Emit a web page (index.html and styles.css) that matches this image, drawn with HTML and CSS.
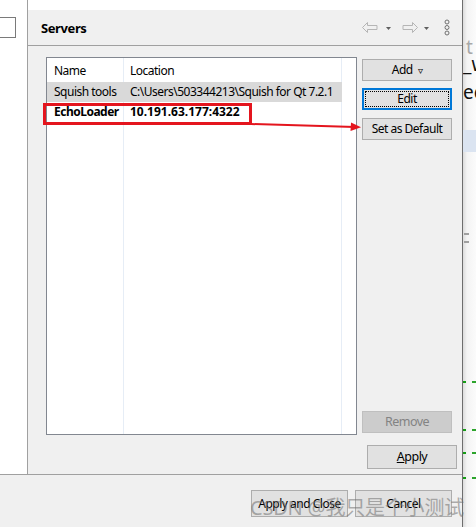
FILE: index.html
```html
<!DOCTYPE html>
<html>
<head>
<meta charset="utf-8">
<link rel="stylesheet" href="styles.css">
</head>
<body>
<div class="screen">
  <div class="window">
    <div class="top">
      <div class="left"><div class="input"></div></div>
      <div class="pref">
        <div class="pref-head">
          <div class="title">Servers</div>
          <div class="tools">
            <svg class="arrow" width="16" height="11" viewBox="0 0 16 11"><path d="M0.5 5.5 L5.5 0.5 L5.5 3.5 L15 3.5 L15 7.5 L5.5 7.5 L5.5 10.5 Z" fill="none" stroke="#b5b5b5" stroke-width="1"/></svg>
            <svg class="drop" width="5" height="3" viewBox="0 0 5 3"><path d="M0 0 H5 L2.5 3 Z" fill="#5f5f5f"/></svg>
            <svg class="arrow fwd" width="16" height="11" viewBox="0 0 16 11"><path d="M15.5 5.5 L10.5 0.5 L10.5 3.5 L1 3.5 L1 7.5 L10.5 7.5 L10.5 10.5 Z" fill="none" stroke="#b5b5b5" stroke-width="1"/></svg>
            <svg class="drop" width="5" height="3" viewBox="0 0 5 3"><path d="M0 0 H5 L2.5 3 Z" fill="#5f5f5f"/></svg>
            <svg class="more" width="6" height="17" viewBox="0 0 6 17"><circle cx="3" cy="3" r="2" fill="none" stroke="#707070"/><circle cx="3" cy="8.5" r="2" fill="none" stroke="#707070"/><circle cx="3" cy="14" r="2" fill="none" stroke="#707070"/></svg>
          </div>
        </div>
        <div class="pref-body">
          <div class="main-row">
            <div class="table">
              <div class="cell head c1">Name</div>
              <div class="cell head c2">Location</div>
              <div class="cell head c3"></div>
              <div class="cell sel c1">Squish tools</div>
              <div class="cell sel c2">C:\Users\503344213\Squish for Qt 7.2.1</div>
              <div class="cell c3"></div>
              <div class="cell bold c1">EchoLoader</div>
              <div class="cell bold ip c2">10.191.63.177:4322</div>
              <div class="cell c3"></div>
              <div class="cell c1"></div>
              <div class="cell c2"></div>
              <div class="cell c3"></div>
            </div>
            <div class="btn-col">
              <div class="btn add">Add <span class="tri">&#9663;</span></div>
              <div class="btn edit"><span class="focus">Edit</span></div>
              <div class="btn setdef">Set as Default</div>
              <div class="btn remove">Remove</div>
            </div>
          </div>
          <div class="apply-row">
            <div class="btn apply"><u>A</u>pply</div>
          </div>
        </div>
      </div>
    </div>
    <div class="bottom">
      <div class="btn big">Apply and Close</div>
      <div class="btn big">Cancel</div>
    </div>
  </div>
  <div class="side">
    <div class="s-t">t</div>
    <div class="s-w">_w</div>
    <div class="s-ec">ec</div>
    <div class="s-band"></div>
    <div class="s-eq"></div>
    <div class="s-dash d1"></div>
    <div class="s-dash d2"></div>
    <div class="s-dash d3"></div>
    <div class="s-dash d4"></div>
  </div>
</div>
<div class="redbox"></div>
<svg class="redarrow" width="120" height="12" viewBox="0 0 120 12"><path d="M0 3 L104 6" stroke="#e4151e" stroke-width="2" fill="none"/><path d="M100 1.5 L110 6.2 L99.5 10 Z" fill="#e4151e"/></svg>
<div class="watermark">CSDN @我只是个小测试</div>
</body>
</html>
```
FILE: styles.css
```css
* { box-sizing: border-box; }
html, body { margin: 0; padding: 0; }
body {
  width: 476px;
  height: 527px;
  overflow: hidden;
  background: #ffffff;
  font-family: "Noto Sans", "Open Sans", sans-serif;
  font-size: 12px;
  letter-spacing: -0.5px;
  color: #000;
  position: relative;
}
.screen { display: flex; width: 476px; height: 527px; }
.window {
  width: 463px;
  height: 527px;
  border-right: 1px solid #6e6e6e;
  display: flex;
  flex-direction: column;
  background: #f0f0f0;
}
.top { display: flex; height: 475px; border-bottom: 1px solid #a0a0a0; }
.left {
  width: 28px;
  background: #fff;
  border-right: 1px solid #a0a0a0;
  padding-top: 17px;
}
.input {
  width: 17px;
  height: 21px;
  margin-left: -1px;
  border: 1px solid #7a7a7a;
  background: #fff;
}
.pref {
  flex: 1;
  display: flex;
  flex-direction: column;
  border-top: 10px solid #ffffff;
  background: #f0f0f0;
}
.pref-head {
  height: 36px;
  border-bottom: 1px solid #a0a0a0;
  display: flex;
  align-items: center;
  padding-left: 13px;
}
.title { font-weight: bold; font-size: 13px; letter-spacing: -0.4px; flex: 1; }
.tools { display: flex; align-items: center; padding-right: 12px; }
.tools .arrow { margin-right: 8px; }
.tools .drop { margin-right: 11px; margin-top: 1px; }
.tools .fwd { margin-right: 6px; }
.tools .more { margin-left: 4px; }
.pref-body {
  flex: 1;
  padding: 11px 5px 5px 18px;
  display: flex;
  flex-direction: column;
}
.main-row { display: flex; height: 378px; }
.table {
  width: 311px;
  height: 378px;
  border: 1px solid #828790;
  background: #fff;
  display: grid;
  grid-template-columns: 77px 218px 14px;
  grid-template-rows: 24px 20px 19px 1fr;
}
.cell {
  white-space: nowrap;
  overflow: hidden;
  display: flex;
  align-items: center;
  padding-left: 6px;
  line-height: 1;
}
.c1, .c2 { border-right: 1px solid #e6edf6; }
.c1 { padding-left: 7px; }
.head { padding-top: 1px; }
.sel.c1, .sel.c2 { background: #d9d9d9; border-right-color: #d9d9d9; }
.bold { font-weight: bold; }
.ip { letter-spacing: 0; }
.btn-col {
  width: 90px;
  margin-left: 5px;
  display: flex;
  flex-direction: column;
  padding-top: 2px;
  padding-bottom: 2px;
}
.btn {
  height: 22px;
  background: #e1e1e1;
  border: 1px solid #adadad;
  display: flex;
  align-items: center;
  justify-content: center;
  line-height: 1;
  white-space: nowrap;
}
.add .tri { font-size: 10px; margin-left: 5px; }
.edit {
  margin-top: 7px;
  border: 2px solid #0078d7;
  padding: 1px;
}
.edit .focus {
  width: 100%;
  height: 100%;
  border: 1px dotted #000;
  display: flex;
  align-items: center;
  justify-content: center;
}
.setdef { margin-top: 8px; }
.remove {
  margin-top: auto;
  background: #cccccc;
  border-color: #bfbfbf;
  color: #838383;
  font-size: 12.5px;
}
.apply-row { display: flex; justify-content: flex-end; margin-top: 10px; }
.apply { width: 90px; height: 24px; font-size: 12.5px; }
.bottom {
  flex: 1;
  display: flex;
  justify-content: flex-end;
  padding: 15px 10px 0 0;
  gap: 7px;
}
.big { width: 97px; height: 27px; }
.side {
  flex: 1;
  position: relative;
  background: linear-gradient(to right, #dcdcdc, #f4f4f4 4px, #fbfbfb);
  overflow: hidden;
  font-size: 19px;
  line-height: 1;
  letter-spacing: 0;
}
.s-t { position: absolute; left: 3px; top: 38px; color: #a8a8a8; }
.s-w { position: absolute; left: 0; top: 55px; color: #111; }
.s-ec { position: absolute; left: 0; top: 83px; color: #111; }
.s-band { position: absolute; left: 0; right: 0; top: 130px; height: 22px; background: #dbe4f1; }
.s-eq { position: absolute; left: 1px; top: 233px; width: 5px; height: 10px; border-top: 2px solid #a0a0a0; border-bottom: 2px solid #a0a0a0; }
.s-dash { position: absolute; left: 0; width: 13px; height: 2px; background: linear-gradient(to right, #149c14 0 3px, transparent 3px 9px, #2da52d 9px 13px); }
.d1 { top: 381px; }
.d2 { top: 429px; }
.d3 { top: 452px; }
.d4 { top: 477px; }
.redbox {
  position: absolute;
  left: 43px;
  top: 103px;
  width: 209px;
  height: 22px;
  border: 3px solid #e4151e;
}
.redarrow { position: absolute; left: 251px; top: 121px; }
.watermark {
  position: absolute;
  left: 250px;
  top: 492px;
  font-family: "Noto Sans", "Noto Sans CJK SC", sans-serif;
  font-size: 20px;
  color: rgba(110, 110, 110, 0.55);
  white-space: nowrap;
  letter-spacing: -0.2px;
}
```
